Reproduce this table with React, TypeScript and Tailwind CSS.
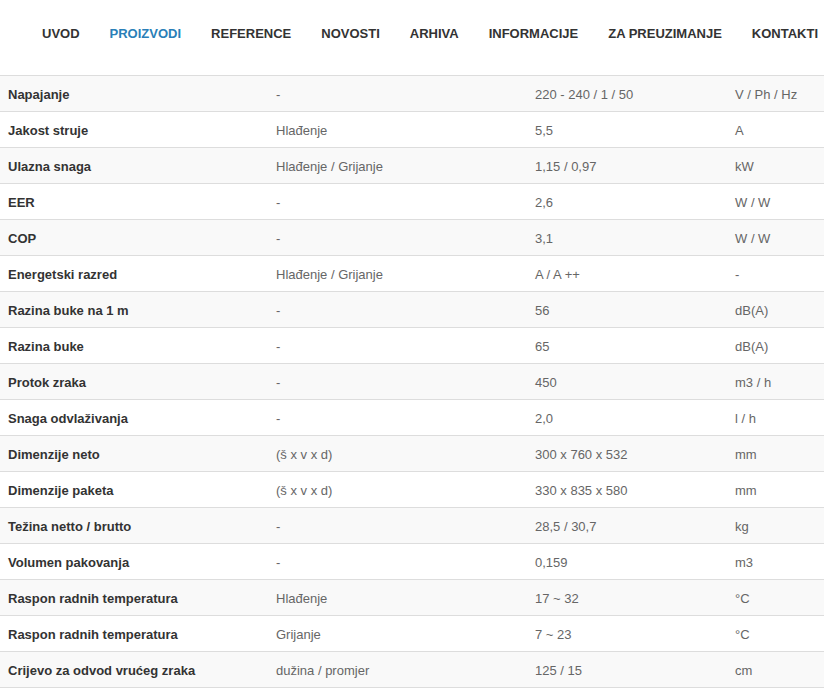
import React from "react";

const nav = ["UVOD", "PROIZVODI", "REFERENCE", "NOVOSTI", "ARHIVA", "INFORMACIJE", "ZA PREUZIMANJE", "KONTAKTI"];

const rows: [string, string, string, string][] = [
  ["Napajanje", "-", "220 - 240 / 1 / 50", "V / Ph / Hz"],
  ["Jakost struje", "Hlađenje", "5,5", "A"],
  ["Ulazna snaga", "Hlađenje / Grijanje", "1,15 / 0,97", "kW"],
  ["EER", "-", "2,6", "W / W"],
  ["COP", "-", "3,1", "W / W"],
  ["Energetski razred", "Hlađenje / Grijanje", "A / A ++", "-"],
  ["Razina buke na 1 m", "-", "56", "dB(A)"],
  ["Razina buke", "-", "65", "dB(A)"],
  ["Protok zraka", "-", "450", "m3 / h"],
  ["Snaga odvlaživanja", "-", "2,0", "l / h"],
  ["Dimenzije neto", "(š x v x d)", "300 x 760 x 532", "mm"],
  ["Dimenzije paketa", "(š x v x d)", "330 x 835 x 580", "mm"],
  ["Težina netto / brutto", "-", "28,5 / 30,7", "kg"],
  ["Volumen pakovanja", "-", "0,159", "m3"],
  ["Raspon radnih temperatura", "Hlađenje", "17 ~ 32", "°C"],
  ["Raspon radnih temperatura", "Grijanje", "7 ~ 23", "°C"],
  ["Crijevo za odvod vrućeg zraka", "dužina / promjer", "125 / 15", "cm"],
];

export default function App() {
  return (
    <div className="w-[828px] h-[690px] overflow-hidden bg-white font-['Liberation_Sans',Arial,sans-serif]">
      <nav className="flex pl-[27px] pt-[1px] h-[66px] items-center whitespace-nowrap">
        {nav.map((n) => (
          <span
            key={n}
            className={`px-[15px] text-[13px] font-bold leading-[20px] ${n === "PROIZVODI" ? "text-[#2a7fb8]" : "text-[#333]"}`}
          >
            {n}
          </span>
        ))}
      </nav>
      <div className="mt-[9px] w-[824px] border-b border-[#ddd]">
        {rows.map((r, i) => (
          <div
            key={i}
            className={`flex h-[36px] pt-[2px] items-center border-t border-[#ddd] text-[13px] leading-[19px] ${i % 2 === 0 ? "bg-[#f9f9f9]" : "bg-white"}`}
          >
            <div className="w-[268px] pl-[8px] font-bold text-[#333]">{r[0]}</div>
            <div className="w-[259px] pl-[8px] text-[#666]">{r[1]}</div>
            <div className="w-[200px] pl-[8px] text-[#666]">{r[2]}</div>
            <div className="flex-1 pl-[8px] text-[#666]">{r[3]}</div>
          </div>
        ))}
      </div>
    </div>
  );
}
